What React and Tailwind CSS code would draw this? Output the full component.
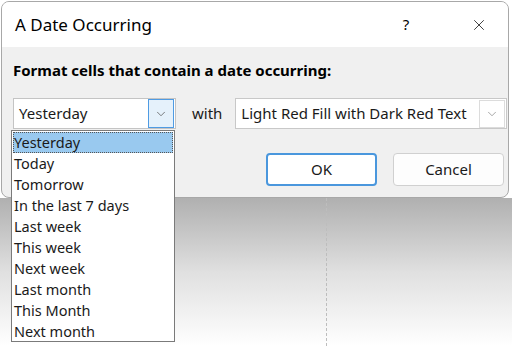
import { X, ChevronDown } from 'lucide-react';

const OPTIONS = [
  'Yesterday', 'Today', 'Tomorrow', 'In the last 7 days', 'Last week',
  'This week', 'Next week', 'Last month', 'This Month', 'Next month',
];

export default function App() {
  return (
    <div className="relative w-[512px] h-[346px] overflow-hidden bg-white flex flex-col font-['Noto_Sans',sans-serif] text-[#1a1a1a]">
      {/* dialog */}
      <div className="ml-[1px] mt-[1px] w-[508px] h-[197px] rounded-lg border border-[#a8a8a8] bg-[#f0f0f0] overflow-hidden flex flex-col">
        <div className="h-[45px] bg-white flex items-center pl-[13px]">
          <span className="text-[17px] text-black flex-1">A Date Occurring</span>
          <span className="text-[15px] text-black w-[20px] text-center mr-[54px]">?</span>
          <X className="w-[18px] h-[18px] mr-[20px]" strokeWidth={1.1} />
        </div>
        <div className="flex-1 pl-[11px]">
          <p className="mt-[13px] text-[15px] leading-[20px] font-bold text-black">Format cells that contain a date occurring:</p>
          <div className="mt-[18px] flex items-center">
            <div className="shrink-0 w-[163px] h-[31px] bg-white border border-[#c4c4c4] flex items-center">
              <span className="flex-1 pl-[5px] text-[15px]">Yesterday</span>
              <div className="w-[26px] h-[29px] mr-[1px] bg-[#e5f1fb] border border-[#4f9be3] flex items-center justify-center">
                <ChevronDown className="w-[14px] h-[14px] text-[#555]" strokeWidth={1.3} />
              </div>
            </div>
            <span className="shrink-0 ml-[16px] text-[15px]">with</span>
            <div className="shrink-0 ml-[13px] w-[272px] h-[31px] bg-white border border-[#c8c8c8] flex items-center">
              <span className="flex-1 pl-[5px] text-[15px]">Light Red Fill with Dark Red Text</span>
              <div className="w-[26px] h-[28px] mr-[1px] bg-white border border-[#dcdcdc] flex items-center justify-center">
                <ChevronDown className="w-[14px] h-[14px] text-[#777]" strokeWidth={1.1} />
              </div>
            </div>
          </div>
          <div className="mt-[24px] flex justify-end gap-[16px] pr-[4px]">
            <button className="w-[111px] h-[33px] rounded-[4px] bg-white border-2 border-[#4a97dd] text-[15px]">OK</button>
            <button className="w-[111px] h-[33px] rounded-[4px] bg-[#fdfdfd] border border-[#d0d0d0] text-[15px]">Cancel</button>
          </div>
        </div>
      </div>

      {/* backdrop below dialog */}
      <div className="flex-1 bg-gradient-to-b from-[#b0b0b0] via-[#e0e0e0] to-white flex">
        <div className="ml-[326px] border-l border-dashed border-[#bdbdbd]" />
      </div>

      {/* open dropdown list */}
      <div className="absolute left-[11px] top-[130px] w-[164px] h-[212px] bg-white border border-[#7a7a7a] text-[14.5px] pt-[1px]">
        {OPTIONS.map((o, i) => (
          <div
            key={o}
            className={`h-[21px] leading-[21px] pl-[1px] mx-[1px] ${i === 0 ? 'bg-[#99c9ef] outline outline-1 outline-dotted outline-[#555] -outline-offset-1' : ''}`}
          >
            {o}
          </div>
        ))}
      </div>
    </div>
  );
}
